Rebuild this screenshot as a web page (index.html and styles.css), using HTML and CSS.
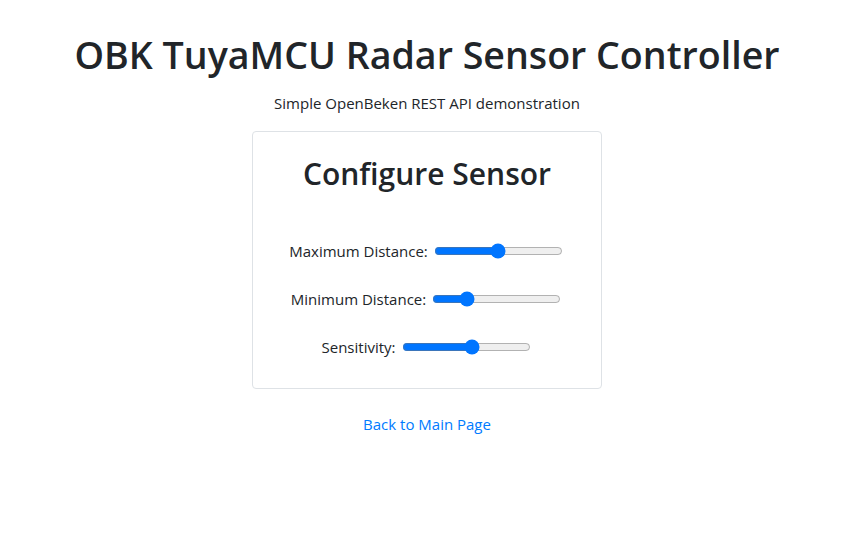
FILE: index.html
```html
<!DOCTYPE html>
<html lang="en">
<head>
    <meta charset="UTF-8">
    <meta name="viewport" content="width=device-width, initial-scale=1.0">
    <title>OBK TuyaMCU Radar Sensor Controller</title>
    <link rel="stylesheet" href="styles.css">
</head>
<body>
    <div class="main-container">
        <h1 class="title">OBK TuyaMCU Radar Sensor Controller</h1>
        <p class="subtitle">Simple OpenBeken REST API demonstration</p>

        <div class="card">
            <h2 class="card-title">Configure Sensor</h2>
            <form class="sensor-form">
                <div class="form-row">
                    <label for="maxDistance">Maximum Distance:</label>
                    <input type="range" id="maxDistance" min="0" max="100" value="50">
                </div>
                <div class="form-row">
                    <label for="minDistance">Minimum Distance:</label>
                    <input type="range" id="minDistance" min="0" max="100" value="24">
                </div>
                <div class="form-row">
                    <label for="sensitivity">Sensitivity:</label>
                    <input type="range" id="sensitivity" min="0" max="100" value="55">
                </div>
            </form>
        </div>

        <a href="/" class="back-link">Back to Main Page</a>
    </div>
</body>
</html>
```

FILE: styles.css
```css
* {
    margin: 0;
    padding: 0;
    box-sizing: border-box;
}

body {
    font-family: 'Open Sans', 'Noto Sans', sans-serif;
    font-size: 15px;
    line-height: 1.6;
    color: #212529;
    background: #fff;
}

.main-container {
    display: flex;
    flex-direction: column;
    align-items: center;
    text-align: center;
    padding: 31px 11px 0 0;
}

.title {
    font-size: 37.6px;
    font-weight: 600;
    line-height: 1.28;
    margin-bottom: 12px;
}

.subtitle {
    margin-bottom: 16px;
}

.card {
    width: 350px;
    border: 1px solid #dee2e6;
    border-radius: 4px;
    padding: 24px 20px 29px;
}

.card-title {
    font-size: 30px;
    font-weight: 600;
    line-height: 1.2;
    margin-bottom: 8px;
}

.sensor-form {
    display: flex;
    flex-direction: column;
    gap: 24px;
    margin-top: 47px;
}

.form-row {
    display: flex;
    align-items: center;
    justify-content: center;
    gap: 4px;
    height: 24px;
}

.form-row input {
    margin: 2px;
}

.back-link {
    margin-top: 23px;
    color: #007bff;
    text-decoration: none;
}
```
